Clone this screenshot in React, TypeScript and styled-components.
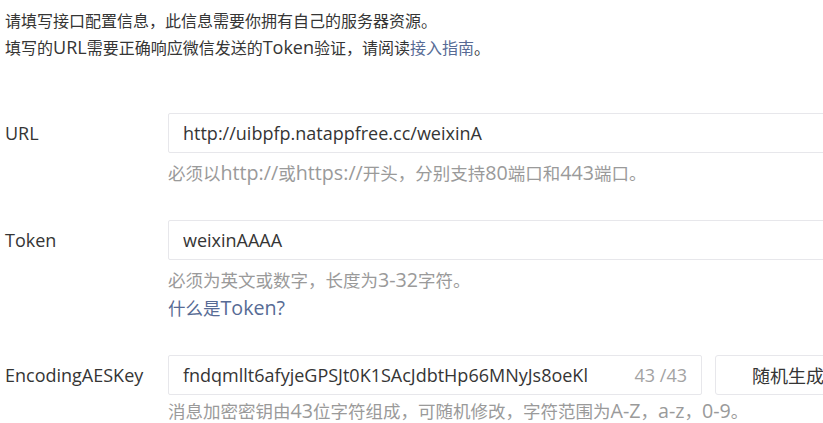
import React from "react";
import styled, { createGlobalStyle } from "styled-components";

const GlobalStyle = createGlobalStyle`
  html, body {
    margin: 0;
    padding: 0;
    background: #ffffff;
    overflow: hidden;
  }
  body {
    font-family: "Open Sans", "Noto Sans CJK SC", sans-serif;
    color: #353535;
  }
`;

const Page = styled.div`
  width: 823px;
  height: 423px;
  overflow: hidden;
  padding: 8px 0 0 5px;
  box-sizing: border-box;
`;

const Intro = styled.div`
  font-size: 16px;
  line-height: 26px;
  color: #353535;
  white-space: nowrap;
`;

/* Latin runs inside mixed Chinese text are set larger, as in the original */
const En = styled.span`
  font-size: 1.125em;
`;

const Link = styled.a`
  color: #576b95;
  text-decoration: none;
`;

const Form = styled.div`
  margin-top: 52px;
  display: flex;
  flex-direction: column;
  gap: 33px;
`;

const Row = styled.div`
  display: flex;
  align-items: flex-start;
`;

const Label = styled.div`
  width: 163px;
  flex: none;
  height: 40px;
  line-height: 40px;
  font-size: 18px;
  color: #353535;
`;

const Control = styled.div`
  display: flex;
  flex-direction: column;
`;

const Field = styled.div`
  display: flex;
  gap: 13px;
`;

const InputBox = styled.div<{ $width: number }>`
  width: ${(p) => p.$width}px;
  height: 40px;
  box-sizing: border-box;
  border: 1px solid #e7e7eb;
  border-radius: 2px;
  background: #fff;
  display: flex;
  align-items: center;
  padding: 0 14px;
`;

const TextInput = styled.input`
  flex: 1;
  min-width: 0;
  border: none;
  outline: none;
  padding: 0;
  background: transparent;
  font-family: "Open Sans", "Noto Sans CJK SC", sans-serif;
  font-size: 18px;
  color: #353535;
`;

const Counter = styled.span`
  font-size: 18px;
  color: #a3a3a3;
  margin-left: 10px;
  white-space: nowrap;
`;

const Button = styled.button`
  width: 146px;
  height: 40px;
  box-sizing: border-box;
  border: 1px solid #e7e7eb;
  border-radius: 3px;
  background: #fff;
  font-family: "Open Sans", "Noto Sans CJK SC", sans-serif;
  font-size: 18px;
  color: #353535;
  padding: 0;
`;

const Hints = styled.div<{ $gap?: number; $lh?: number }>`
  margin-top: ${(p) => p.$gap ?? 6}px;
  font-size: 17.5px;
  line-height: ${(p) => p.$lh ?? 27}px;
  color: #9a9a9a;
  white-space: nowrap;
`;

export default function App() {
  return (
    <>
      <GlobalStyle />
      <Page>
        <Intro>
          <div>请填写接口配置信息，此信息需要你拥有自己的服务器资源。</div>
          <div>
            填写的<En>URL</En>需要正确响应微信发送的<En>Token</En>验证，请阅读
            <Link href="#">接入指南</Link>。
          </div>
        </Intro>
        <Form>
          <Row>
            <Label>URL</Label>
            <Control>
              <InputBox $width={691}>
                <TextInput readOnly defaultValue="http://uibpfp.natappfree.cc/weixinA" />
              </InputBox>
              <Hints>
                必须以<En>http://</En>或<En>https://</En>开头，分别支持<En>80</En>端口和<En>443</En>端口。
              </Hints>
            </Control>
          </Row>
          <Row>
            <Label>Token</Label>
            <Control>
              <InputBox $width={691}>
                <TextInput readOnly defaultValue="weixinAAAA" />
              </InputBox>
              <Hints>
                <div>
                  必须为英文或数字，长度为<En>3-32</En>字符。
                </div>
                <Link href="#">
                  什么是<En>Token?</En>
                </Link>
              </Hints>
            </Control>
          </Row>
          <Row>
            <Label>EncodingAESKey</Label>
            <Control>
              <Field>
                <InputBox $width={534}>
                  <TextInput readOnly defaultValue="fndqmllt6afyjeGPSJt0K1SAcJdbtHp66MNyJs8oeKl" />
                  <Counter>43 /43</Counter>
                </InputBox>
                <Button>随机生成</Button>
              </Field>
              <Hints $gap={5} $lh={22}>
                消息加密密钥由<En>43</En>位字符组成，可随机修改，字符范围为<En>A-Z</En>，<En>a-z</En>，<En>0-9</En>。
              </Hints>
            </Control>
          </Row>
        </Form>
      </Page>
    </>
  );
}
